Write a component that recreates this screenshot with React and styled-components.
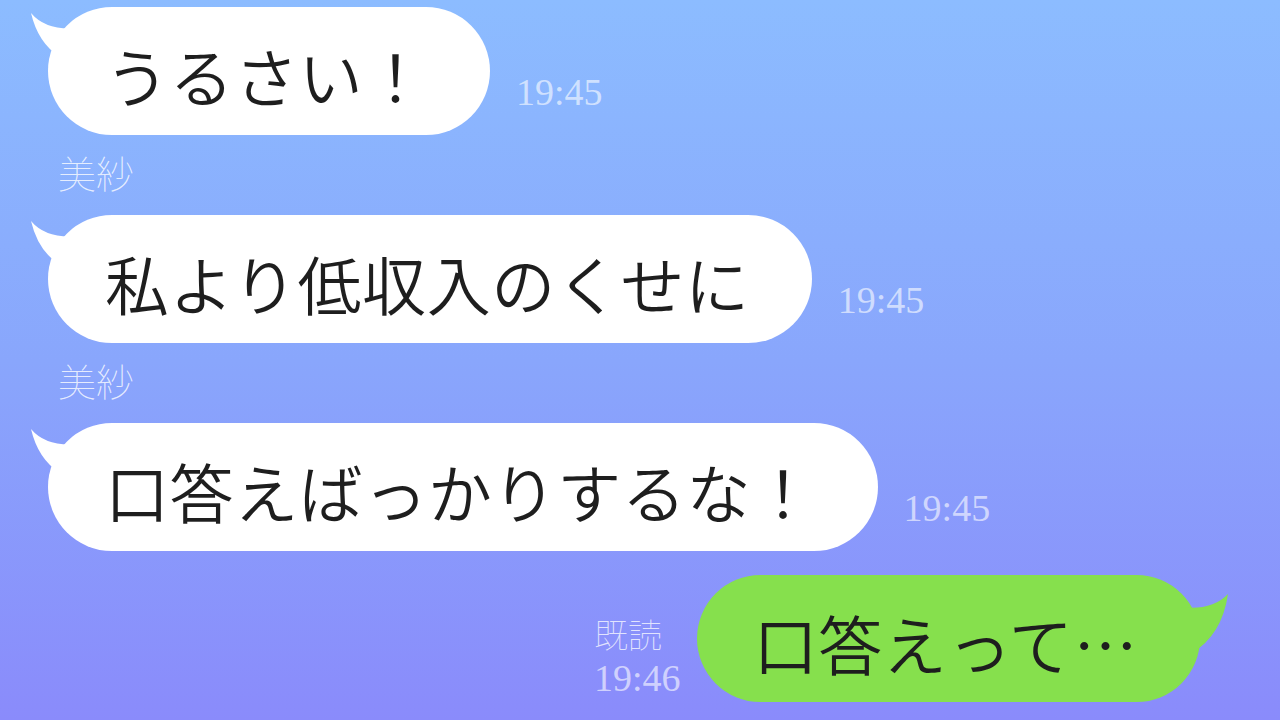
import styled, { createGlobalStyle } from 'styled-components';

const GlobalStyle = createGlobalStyle`
    html, body {
        margin: 0;
        padding: 0;
    }
    body {
        font-family: "Noto Sans CJK JP", "Noto Sans", sans-serif;
    }
`;

const messages = [
    { id: 1, text: 'うるさい！', time: '19:45' },
    { id: 2, name: '美紗', text: '私より低収入のくせに', time: '19:45' },
    { id: 3, name: '美紗', text: '口答えばっかりするな！', time: '19:45' },
];

const LeftTail = () => (
    <TailSvg $side="left" width="60" height="90" viewBox="0 0 60 90">
        <path d="M3 6 Q18 24 50 21 L50 60 L32 50 Q10 36 3 6 Z" fill="#ffffff" />
    </TailSvg>
);

const RightTail = ({ color }) => (
    <TailSvg $side="right" width="60" height="90" viewBox="0 0 60 90">
        <path d="M58 19 Q42 36 10 32 L10 84 L22 78 Q52 60 58 19 Z" fill={color} />
    </TailSvg>
);

const App = () => {
    return (
        <>
            <GlobalStyle />
            <Screen>
                <Thread>
                    {messages.map((m) => (
                        <Group key={m.id}>
                            {m.name && <Name>{m.name}</Name>}
                            <Row>
                                <Bubble>
                                    <LeftTail />
                                    <BubbleText>{m.text}</BubbleText>
                                </Bubble>
                                <Time>{m.time}</Time>
                            </Row>
                        </Group>
                    ))}

                    <MyRow>
                        <Status>
                            <Read>既読</Read>
                            <StatusTime>19:46</StatusTime>
                        </Status>
                        <Bubble $mine>
                            <RightTail color="#86e04d" />
                            <BubbleText>口答えって…</BubbleText>
                        </Bubble>
                    </MyRow>
                </Thread>
            </Screen>
        </>
    );
};

export default App;

//style component

const Screen = styled.div`
    width: 1280px;
    height: 720px;
    overflow: hidden;
    background: linear-gradient(180deg, #8cbcff 0%, #89a6fc 50%, #8a8bfb 100%);
`;

const Thread = styled.div`
    display: flex;
    flex-direction: column;
    padding: 7px 80px 0 48px;
`;

const Group = styled.div`
    display: flex;
    flex-direction: column;
`;

const Name = styled.div`
    margin: 12px 0 18px 10px;
    height: 50px;
    font-size: 38px;
    line-height: 50px;
    font-weight: 100;
    color: rgba(255, 255, 255, 0.8);
`;

const Row = styled.div`
    display: flex;
    align-items: flex-end;
`;

const Bubble = styled.div`
    position: relative;
    display: flex;
    align-items: center;
    height: ${(p) => (p.$mine ? '127px' : '128px')};
    padding: 0 62px 0 57px;
    border-radius: 64px;
    background: ${(p) => (p.$mine ? '#86e04d' : '#ffffff')};
`;

const TailSvg = styled.svg`
    position: absolute;
    top: 0;
    ${(p) => (p.$side === 'left' ? 'left: -20px;' : 'right: -30px;')}
`;

const BubbleText = styled.span`
    position: relative;
    font-size: 64px;
    line-height: 1;
    font-weight: 350;
    letter-spacing: 0.6px;
    color: #1e1e1e;
    white-space: nowrap;
    padding-top: 6px;
`;

const Time = styled.span`
    margin: 0 0 24px 26px;
    font-family: "Liberation Serif", serif;
    font-size: 38px;
    line-height: 1;
    color: rgba(255, 255, 255, 0.6);
`;

const MyRow = styled.div`
    display: flex;
    justify-content: flex-end;
    align-items: flex-end;
    margin-top: 24px;
`;

const Status = styled.div`
    display: flex;
    flex-direction: column;
    margin: 0 16px 2px 0;
`;

const Read = styled.span`
    font-size: 34px;
    line-height: 36px;
    font-weight: 100;
    color: rgba(255, 255, 255, 0.75);
`;

const StatusTime = styled.span`
    margin-top: 4px;
    font-family: "Liberation Serif", serif;
    font-size: 38px;
    line-height: 44px;
    color: rgba(255, 255, 255, 0.6);
`;
